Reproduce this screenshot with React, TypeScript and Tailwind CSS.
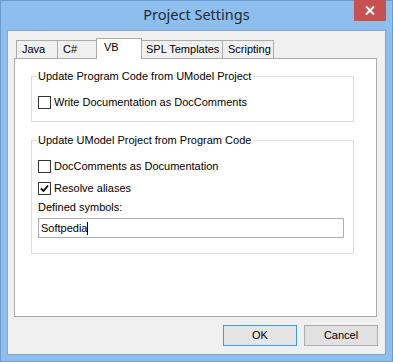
import React from "react";

const font = { fontFamily: '"Liberation Sans", Arial, sans-serif' };

function Check({ checked }: { checked?: boolean }) {
  return (
    <span className="w-[13px] h-[13px] border border-[#333333] bg-white shrink-0 flex items-center justify-center">
      {checked && (
        <svg width="9" height="9" viewBox="0 0 9 9">
          <path d="M1 4.5 L3.5 7 L8 1.5" stroke="#000" strokeWidth="1.8" fill="none" />
        </svg>
      )}
    </span>
  );
}

function CheckRow({ label, checked }: { label: string; checked?: boolean }) {
  return (
    <div className="flex items-center gap-[3px] h-[13px]">
      <Check checked={checked} />
      <span className="leading-[13px]">{label}</span>
    </div>
  );
}

const tabs = [
  { name: "Java", w: "w-[42px]" },
  { name: "C#", w: "w-[42px]" },
  { name: "VB", w: "w-[46px]", active: true },
  { name: "SPL Templates", w: "w-[83px]" },
  { name: "Scripting", w: "w-[52px]" },
];

export default function App() {
  return (
    <div
      className="relative w-[393px] h-[362px] bg-[#8ebeeb] border border-[#6d9bcb] px-[6px] pb-[6px] flex flex-col text-[11px] text-black"
      style={font}
    >
      {/* title bar */}
      <div className="h-[29px] flex items-center justify-center shrink-0">
        <span
          className="text-[14.5px] text-[#222a36] leading-none -mt-[2px]"
          style={{ fontFamily: '"Noto Sans", "Open Sans", sans-serif' }}
        >
          Project Settings
        </span>
      </div>
      <button className="absolute -top-[1px] right-[6px] w-[32px] h-[21px] bg-[#c75050] flex items-center justify-center">
        <svg width="10" height="9" viewBox="0 0 10 9">
          <path d="M1 0.5 L9 8.5 M9 0.5 L1 8.5" stroke="#fff" strokeWidth="2" />
        </svg>
      </button>

      {/* client area */}
      <div className="flex-1 border border-[#82a8d0] bg-[#f0f0f0] pl-[6px] pr-[8px] pt-[7px] flex flex-col">
        <div className="flex items-end pl-[2px] h-[20px]">
          {tabs.map((t) =>
            t.active ? (
              <div
                key={t.name}
                className={`relative z-10 ${t.w} h-[21px] -mx-[2px] -mb-[1px] bg-white border border-b-0 border-[#acacac] pl-[7px] pt-[2px] leading-[13px]`}
              >
                {t.name}
              </div>
            ) : (
              <div
                key={t.name}
                className={`${t.w} -mr-[1px] h-[18px] bg-[#f0f0f0] border border-b-0 border-[#acacac] pl-[5px] pt-[2px] leading-[13px]`}
              >
                {t.name}
              </div>
            )
          )}
        </div>
        <div className="w-[363px] h-[259px] bg-white border border-[#acacac] pl-[16px] pt-[11px]">
          <fieldset className="w-[323px] border border-[#dcdcdc] pl-[6px] pb-[12px]">
            <legend className="px-[2px] -ml-[2px] leading-[13px]">
              Update Program Code from UModel Project
            </legend>
            <div className="mt-[13px]">
              <CheckRow label="Write Documentation as DocComments" />
            </div>
          </fieldset>
          <fieldset className="mt-[12px] w-[323px] border border-[#dcdcdc] pl-[6px] pb-[15px]">
            <legend className="px-[2px] -ml-[2px] leading-[13px]">
              Update UModel Project from Program Code
            </legend>
            <div className="mt-[13px] flex flex-col gap-[9px]">
              <CheckRow label="DocComments as Documentation" />
              <CheckRow label="Resolve aliases" checked />
            </div>
            <div className="mt-[6px] leading-[13px]">Defined symbols:</div>
            <div className="mt-[4px] w-[306px] h-[20px] border border-[#abadb3] bg-white flex items-center pl-[2px]">
              <span className="leading-[13px]">Softpedia</span>
              <span className="w-[1px] h-[13px] bg-black" />
            </div>
          </fieldset>
        </div>
        <div className="flex justify-end gap-[7px] mt-[8px] -mr-[1px]">
          <button className="w-[74px] h-[21px] border border-[#3c9be6] bg-[#e5e5e5] leading-none">
            OK
          </button>
          <button className="w-[74px] h-[21px] border border-[#acacac] bg-[#e1e1e1] leading-none">
            Cancel
          </button>
        </div>
      </div>
    </div>
  );
}
